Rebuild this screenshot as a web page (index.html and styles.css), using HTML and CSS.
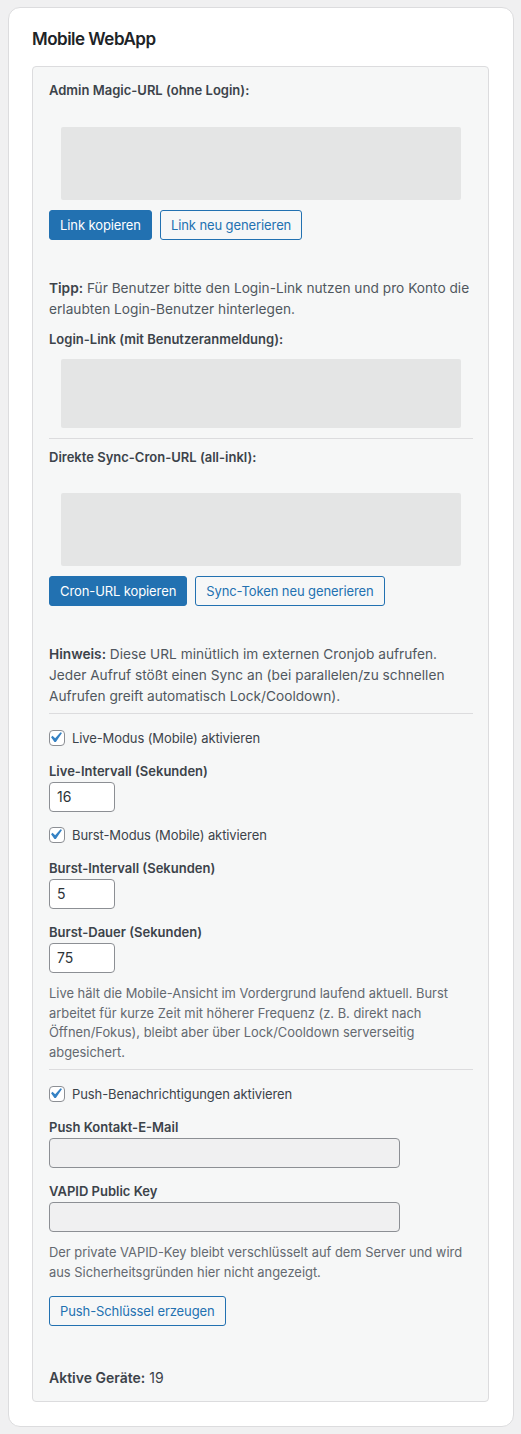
FILE: index.html
```html
<!DOCTYPE html>
<html lang="de">
<head>
<meta charset="utf-8">
<title>Mobile WebApp</title>
<link rel="stylesheet" href="styles.css">
</head>
<body>
<div class="card">
  <h2 class="card-title">Mobile WebApp</h2>
  <div class="panel">
    <div class="label label-first">Admin Magic-URL (ohne Login):</div>
    <div class="qr qr-first"></div>
    <div class="btn-row">
      <button class="btn btn-primary">Link kopieren</button>
      <button class="btn btn-secondary">Link neu generieren</button>
    </div>
    <p class="text tip"><strong>Tipp:</strong> Für Benutzer bitte den Login-Link nutzen und pro Konto die erlaubten Login-Benutzer hinterlegen.</p>
    <div class="label label-login">Login-Link (mit Benutzeranmeldung):</div>
    <div class="qr qr-login"></div>
    <hr class="sep sep-1">
    <div class="label label-cron">Direkte Sync-Cron-URL (all-inkl):</div>
    <div class="qr qr-cron"></div>
    <div class="btn-row">
      <button class="btn btn-primary">Cron-URL kopieren</button>
      <button class="btn btn-secondary">Sync-Token neu generieren</button>
    </div>
    <p class="text hint"><strong>Hinweis:</strong> Diese URL minütlich im externen Cronjob aufrufen. Jeder Aufruf stößt einen Sync an (bei parallelen/zu schnellen Aufrufen greift automatisch Lock/Cooldown).</p>
    <hr class="sep sep-2">

    <label class="check check-first">
      <svg class="cb" viewBox="0 0 16 16" width="16" height="16"><rect x="0.5" y="0.5" width="15" height="15" rx="3.5" fill="#fff" stroke="#8c8f94"/><g transform="translate(-4 -3) scale(1.05)"><path d="M14.83 4.89l1.34.94-5.81 8.38H9.02L5.78 9.67l1.34-1.25 2.57 2.4z" fill="#3582c4"/></g></svg>
      <span>Live-Modus (Mobile) aktivieren</span>
    </label>
    <div class="field">
      <div class="label">Live-Intervall (Sekunden)</div>
      <div class="input input-num">16</div>
    </div>
    <label class="check">
      <svg class="cb" viewBox="0 0 16 16" width="16" height="16"><rect x="0.5" y="0.5" width="15" height="15" rx="3.5" fill="#fff" stroke="#8c8f94"/><g transform="translate(-4 -3) scale(1.05)"><path d="M14.83 4.89l1.34.94-5.81 8.38H9.02L5.78 9.67l1.34-1.25 2.57 2.4z" fill="#3582c4"/></g></svg>
      <span>Burst-Modus (Mobile) aktivieren</span>
    </label>
    <div class="field">
      <div class="label">Burst-Intervall (Sekunden)</div>
      <div class="input input-num">5</div>
    </div>
    <div class="field">
      <div class="label">Burst-Dauer (Sekunden)</div>
      <div class="input input-num">75</div>
    </div>
    <p class="desc desc-live">Live hält die Mobile-Ansicht im Vordergrund laufend aktuell. Burst arbeitet für kurze Zeit mit höherer Frequenz (z. B. direkt nach Öffnen/Fokus), bleibt aber über Lock/Cooldown serverseitig abgesichert.</p>
    <hr class="sep sep-3">

    <label class="check check-push">
      <svg class="cb" viewBox="0 0 16 16" width="16" height="16"><rect x="0.5" y="0.5" width="15" height="15" rx="3.5" fill="#fff" stroke="#8c8f94"/><g transform="translate(-4 -3) scale(1.05)"><path d="M14.83 4.89l1.34.94-5.81 8.38H9.02L5.78 9.67l1.34-1.25 2.57 2.4z" fill="#3582c4"/></g></svg>
      <span>Push-Benachrichtigungen aktivieren</span>
    </label>
    <div class="field">
      <div class="label">Push Kontakt-E-Mail</div>
      <div class="input input-wide"></div>
    </div>
    <div class="field">
      <div class="label">VAPID Public Key</div>
      <div class="input input-wide"></div>
    </div>
    <p class="desc desc-push">Der private VAPID-Key bleibt verschlüsselt auf dem Server und wird aus Sicherheitsgründen hier nicht angezeigt.</p>
    <div class="btn-row btn-row-push">
      <button class="btn btn-secondary">Push-Schlüssel erzeugen</button>
    </div>
    <div class="devices"><strong>Aktive Geräte:</strong> 19</div>
  </div>
</div>
</body>
</html>
```

FILE: styles.css
```css
* { box-sizing: border-box; }

html, body {
  margin: 0;
  padding: 0;
  background: #f0f0f1;
}

body {
  padding: 7px 7px 7px 8px;
  font-family: "Inter", "Noto Sans", sans-serif;
  color: #3c434a;
  font-size: 14px;
}

.card {
  width: 506px;
  height: 1420px;
  background: #fff;
  border: 1px solid #dcdcde;
  border-radius: 12px;
  padding: 19px 24px 24px 23px;
}

.card-title {
  margin: 0;
  font-size: 17px;
  line-height: 24px;
  font-weight: 600;
  color: #1d2327;
  letter-spacing: -0.5px;
}

.panel {
  margin-top: 15px;
  background: #f6f7f7;
  border: 1px solid #dcdcde;
  border-radius: 4px;
  padding: 13px 15px 13px 16px;
}

.label {
  font-size: 13px;
  line-height: 20px;
  font-weight: 600;
  color: #3c434a;
}

.label-login { margin-top: 9px; }
.label-cron { margin-top: 8px; }

.qr {
  width: 400px;
  margin-left: 12px;
  background: #e4e5e5;
  border-radius: 2px;
}
.qr-first { margin-top: 27px; height: 73px; }
.qr-login { margin-top: 10px; height: 69px; }
.qr-cron { margin-top: 26px; height: 73px; }

.btn-row {
  display: flex;
  gap: 8px;
  margin-top: 10px;
}

.btn {
  height: 30px;
  padding: 0 10px;
  border-radius: 3px;
  border: 1px solid #2271b1;
  font-family: inherit;
  font-size: 13px;
  line-height: 28px;
  letter-spacing: -0.1px;
  cursor: pointer;
}

.btn-primary {
  background: #2271b1;
  color: #fff;
}

.btn-secondary {
  background: #f6f7f7;
  color: #2271b1;
}

.text {
  margin: 0;
  font-size: 13.7px;
  line-height: 21px;
  color: #50575e;
}
.text strong { font-weight: 600; color: #3c434a; }

.tip { margin-top: 38px; }
.hint { margin-top: 38px; }

.sep {
  border: 0;
  height: 1px;
  background: #dcdcde;
  margin: 0;
}
.sep-1 { margin-top: 10px; }
.sep-2 { margin-top: 6px; }
.sep-3 { margin-top: 7px; }

.check {
  display: flex;
  align-items: center;
  gap: 7px;
  height: 20px;
  margin-top: 13px;
  font-size: 13px;
  color: #3c434a;
  letter-spacing: -0.1px;
}
.check-first { margin-top: 14px; }
.check-push { margin-top: 14px; }

.cb { flex: none; overflow: visible; }

.field { margin-top: 13px; }

.input {
  margin-top: 1px;
  height: 30px;
  border: 1px solid #8c8f94;
  border-radius: 4px;
  background: #fff;
  padding: 0 7px;
  font-size: 14px;
  line-height: 28px;
  color: #2c3338;
}
.input-num { width: 66px; }
.input-wide { width: 351px; background: #f0f0f1; }

.desc {
  margin: 0;
  font-size: 12.9px;
  line-height: 19.5px;
  color: #646970;
}
.desc-live { margin-top: 11px; }
.desc-push { margin-top: 11px; }

.btn-row-push { margin-top: 14px; }

.devices {
  margin-top: 42px;
  font-size: 14px;
  line-height: 20px;
  color: #3c434a;
}
.devices strong { font-weight: 600; }
```
